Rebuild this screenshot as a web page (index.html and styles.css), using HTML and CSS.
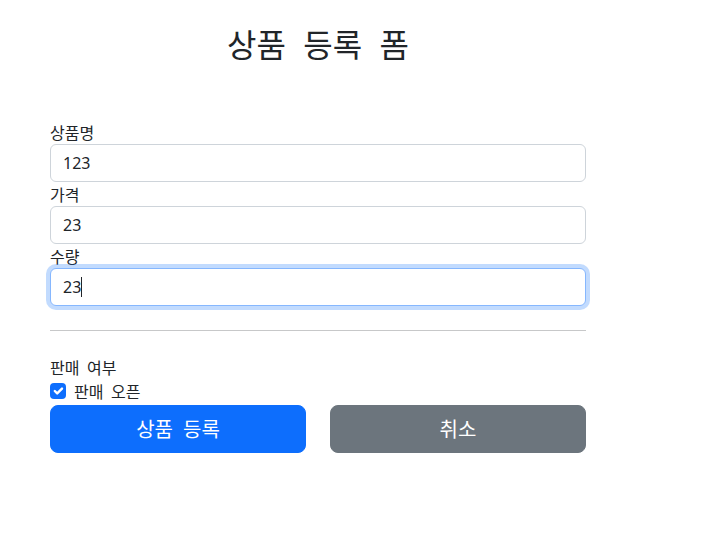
FILE: index.html
```html
<!DOCTYPE html>
<html lang="ko">
<head>
<meta charset="utf-8">
<title>상품 등록 폼</title>
<link rel="stylesheet" href="styles.css">
</head>
<body>
<div class="container">
  <div class="header">
    <h2 class="title">상품 등록 폼</h2>
  </div>
  <form class="form">
    <div>
      <label class="label" for="itemName">상품명</label>
      <input class="control" id="itemName" type="text" value="123">
    </div>
    <div>
      <label class="label" for="price">가격</label>
      <input class="control" id="price" type="text" value="23">
    </div>
    <div>
      <label class="label" for="quantity">수량</label>
      <div class="field-wrap">
        <input class="control focused" id="quantity" type="text" value="23">
        <span class="caret"></span>
      </div>
    </div>
    <hr class="divider">
    <div>
      <div class="label">판매 여부</div>
      <div class="check">
        <span class="check-box">
          <svg viewBox="0 0 20 20" width="16" height="16"><path d="M6 10l3 3l6-6" fill="none" stroke="#fff" stroke-width="3" stroke-linecap="round" stroke-linejoin="round"/></svg>
        </span>
        <span class="check-label">판매 오픈</span>
      </div>
    </div>
    <div class="buttons">
      <button class="btn btn-primary" type="button">상품 등록</button>
      <button class="btn btn-secondary" type="button">취소</button>
    </div>
  </form>
</div>
</body>
</html>
```

FILE: styles.css
```css
* { box-sizing: border-box; }
html, body {
  margin: 0;
  padding: 0;
  background: #fff;
}
body {
  font-family: "Noto Sans", "Noto Sans CJK KR", sans-serif;
  font-size: 16px;
  line-height: 1.5;
  color: #212529;
}
.container {
  width: 560px;
  margin-left: 38px;
  padding: 0 12px;
}
.header {
  padding-top: 24px;
  padding-bottom: 48px;
  text-align: center;
}
.title {
  margin: 0 0 8px 0;
  font-size: 32px;
  font-weight: 400;
  line-height: 1.2;
  height: 40px;
  word-spacing: 0.26em;
  font-family: "Noto Sans CJK KR", sans-serif;
}
.form {
  display: flex;
  flex-direction: column;
}
.label {
  display: block;
  height: 24px;
  font-family: "Noto Sans CJK KR", sans-serif;
  font-size: 16px;
  line-height: 24px;
  word-spacing: 0.2em;
}
.field-wrap {
  position: relative;
}
.control {
  display: block;
  width: 100%;
  height: 38px;
  padding: 6px 12px;
  font-family: "Noto Sans", "Noto Sans CJK KR", sans-serif;
  font-size: 16px;
  line-height: 24px;
  color: #212529;
  background: #fff;
  border: 1px solid #ced4da;
  border-radius: 6px;
  outline: none;
}
.control.focused {
  border-color: #86b7fe;
  box-shadow: 0 0 0 4px rgba(13, 110, 253, 0.25);
}
.caret {
  position: absolute;
  left: 31px;
  top: 9px;
  width: 1px;
  height: 20px;
  background: #212529;
}
.divider {
  margin: 24px 0;
  border: 0;
  border-top: 1px solid #212529;
  opacity: 0.25;
  height: 0;
}
.check {
  display: flex;
  align-items: flex-start;
  min-height: 24px;
  margin-bottom: 2px;
}
.check-box {
  width: 16px;
  height: 16px;
  margin-top: 4px;
  margin-right: 8px;
  background: #0d6efd;
  border-radius: 4px;
  display: flex;
}
.check-box svg { display: block; }
.check-label {
  font-family: "Noto Sans CJK KR", sans-serif;
  line-height: 24px;
  word-spacing: 0.2em;
}
.buttons {
  display: grid;
  grid-template-columns: 1fr 1fr;
  column-gap: 24px;
}
.btn {
  height: 48px;
  padding: 8px 16px;
  font-family: "Noto Sans CJK KR", sans-serif;
  font-size: 20px;
  line-height: 30px;
  word-spacing: 0.22em;
  color: #fff;
  border: 1px solid transparent;
  border-radius: 8px;
  text-align: center;
}
.btn-primary {
  background: #0d6efd;
  border-color: #0d6efd;
}
.btn-secondary {
  background: #6c757d;
  border-color: #6c757d;
}
```
